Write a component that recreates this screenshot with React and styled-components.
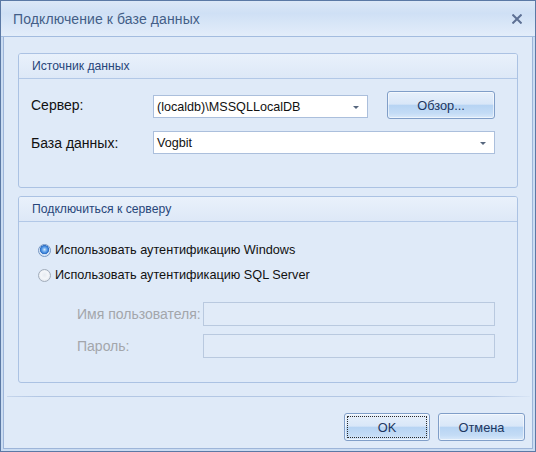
import React from 'react';
import styled, { createGlobalStyle } from 'styled-components';

const Global = createGlobalStyle`
  html, body { margin: 0; padding: 0; background: #cfdff3; }
  body { font-family: "Liberation Sans", Arial, sans-serif; }
`;

const Window = styled.div`
  width: 536px;
  height: 452px;
  box-sizing: border-box;
  border: 1px solid #5b79a5;
  background: #cadcf2;
  display: flex;
  flex-direction: column;
`;

const TitleBar = styled.div`
  height: 35px;
  flex: none;
  border-bottom: 1px solid #a3bcdf;
  background: linear-gradient(#dce8f7 0%, #cfe0f5 35%, #e3edfa 100%);
  display: flex;
  align-items: center;
  justify-content: space-between;
  padding: 0 13px 0 12px;
`;

const Title = styled.span`
  font-size: 14px;
  color: #435e87;
  letter-spacing: 0.1px;
`;

const CloseBtn = styled.svg`
  width: 10px;
  height: 10px;
  margin-top: 1px;
`;

const Client = styled.div`
  flex: 1;
  margin: 0 2px 2px;
  border: 1px solid #9db5d9;
  border-top: none;
  background: #dfeaf8;
  display: flex;
  flex-direction: column;
`;

const Content = styled.div`
  padding: 16px 14px 0;
  display: flex;
  flex-direction: column;
  gap: 8px;
`;

const Group = styled.div`
  height: ${p => p.h}px;
  box-sizing: border-box;
  border: 1px solid #abc2e3;
  border-radius: 3px;
  display: flex;
  flex-direction: column;
  overflow: hidden;
`;

const GroupHeader = styled.div`
  height: 24px;
  flex: none;
  border-bottom: 1px solid #b2c8e7;
  background: linear-gradient(#e9f1fb, #dde8f7);
  display: flex;
  align-items: center;
  padding-left: 13px;
  font-size: 12.2px;
  color: #28467a;
`;

const SourceBody = styled.div`
  flex: 1;
  padding: 12px 22px 0 12px;
  display: flex;
  flex-direction: column;
  gap: 12px;
`;

const Row = styled.div`
  display: flex;
  align-items: center;
  height: ${p => p.h}px;
`;

const Label = styled.span`
  width: ${p => p.w}px;
  flex: none;
  font-size: 14px;
  color: ${p => (p.disabled ? '#a3a6ab' : '#111')};
`;

const Combo = styled.div`
  width: ${p => p.w}px;
  height: 23px;
  box-sizing: border-box;
  margin-top: ${p => p.mt || 0}px;
  background: #fff;
  border: 1px solid #abbfdc;
  display: flex;
  align-items: center;
  justify-content: space-between;
  padding: 0 8px 0 3px;
  font-size: 12.6px;
  color: #111;
`;

const Arrow = styled.span`
  width: 0;
  height: 0;
  border-left: 3px solid transparent;
  border-right: 3px solid transparent;
  border-top: 3px solid #56677e;
  margin-top: 1px;
`;

const Button = styled.button`
  position: relative;
  width: ${p => p.w}px;
  height: ${p => p.h || 28}px;
  flex: none;
  box-sizing: border-box;
  margin-left: ${p => p.ml || 0}px;
  border: 1px solid #809ec8;
  border-radius: 3px;
  background: linear-gradient(#e7f0fb 0%, #d9e7f8 46%, #b7d4f3 52%, #c4dcf6 82%, #d9e9fa 100%);
  box-shadow: inset 0 0 0 1px rgba(255, 255, 255, 0.55);
  font-family: "Liberation Sans", Arial, sans-serif;
  font-size: 12.8px;
  color: #1d3761;
  padding: 0;
  display: flex;
  align-items: center;
  justify-content: center;
  &::after {
    content: '';
    display: ${p => (p.focused ? 'block' : 'none')};
    position: absolute;
    inset: 2px;
    border: 1px dotted #2a2a2a;
    border-radius: 1px;
  }
`;

const AuthBody = styled.div`
  flex: 1;
  padding: 18px 22px 0 19px;
  display: flex;
  flex-direction: column;
`;

const RadioRow = styled.div`
  height: 20px;
  display: flex;
  align-items: center;
  gap: 4px;
  margin-bottom: ${p => p.mb || 0}px;
  font-size: 12.7px;
  color: #111;
`;

const RadioDot = styled.span`
  width: 13px;
  height: 13px;
  box-sizing: border-box;
  border-radius: 50%;
  flex: none;
  border: 1px solid ${p => (p.checked ? '#7797c3' : '#a2adbb')};
  background: ${p =>
    p.checked
      ? 'radial-gradient(circle at 50% 42%, #d6ecff 0, #7fb6f0 1.6px, #3f86dc 3.4px, #2d6cc0 4.3px, #cfe0f4 4.8px, #eef4fb 100%)'
      : 'radial-gradient(circle at 50% 45%, #e6ebf1 0, #f4f6f9 45%, #d8dfe8 100%)'};
`;

const CredRows = styled.div`
  padding-left: 39px;
  display: flex;
  flex-direction: column;
  gap: 8px;
`;

const Input = styled.div`
  width: 293px;
  height: 24px;
  box-sizing: border-box;
  border: 1px solid #b9c9df;
  background: #e1ebf8;
`;

const Separator = styled.div`
  height: 1px;
  margin: 13px 2px 0 3px;
  background: linear-gradient(90deg, #c6d6ec 0%, #b3c7e4 6%, #b3c7e4 92%, #d9e5f5 100%);
`;

const ButtonBar = styled.div`
  padding: 16px 7px 0 0;
  display: flex;
  justify-content: flex-end;
  gap: 8px;
`;

export default function App() {
  return (
    <>
      <Global />
      <Window>
        <TitleBar>
          <Title>Подключение к базе данных</Title>
          <CloseBtn viewBox="0 0 10 10">
            <path d="M1.2 1.2 L8.8 8.8 M8.8 1.2 L1.2 8.8" stroke="#5d7094" strokeWidth="2" strokeLinecap="square" />
          </CloseBtn>
        </TitleBar>
        <Client>
          <Content>
            <Group h={135}>
              <GroupHeader>Источник данных</GroupHeader>
              <SourceBody>
                <Row h={28}>
                  <Label w={122}>Сервер:</Label>
                  <Combo w={217} mt={3}>
                    <span>(localdb)\MSSQLLocalDB</span>
                    <Arrow />
                  </Combo>
                  <Button w={108} ml={19}>Обзор...</Button>
                </Row>
                <Row h={23}>
                  <Label w={122}>База данных:</Label>
                  <Combo w={343}>
                    <span>Vogbit</span>
                    <Arrow />
                  </Combo>
                </Row>
              </SourceBody>
            </Group>
            <Group h={187}>
              <GroupHeader>Подключиться к серверу</GroupHeader>
              <AuthBody>
                <RadioRow mb={5}>
                  <RadioDot checked />
                  <span>Использовать аутентификацию Windows</span>
                </RadioRow>
                <RadioRow mb={17}>
                  <RadioDot />
                  <span>Использовать аутентификацию SQL Server</span>
                </RadioRow>
                <CredRows>
                  <Row h={24}>
                    <Label w={126} disabled>Имя пользователя:</Label>
                    <Input />
                  </Row>
                  <Row h={24}>
                    <Label w={126} disabled>Пароль:</Label>
                    <Input />
                  </Row>
                </CredRows>
              </AuthBody>
            </Group>
          </Content>
          <Separator />
          <ButtonBar>
            <Button w={86} focused>OK</Button>
            <Button w={87}>Отмена</Button>
          </ButtonBar>
        </Client>
      </Window>
    </>
  );
}
